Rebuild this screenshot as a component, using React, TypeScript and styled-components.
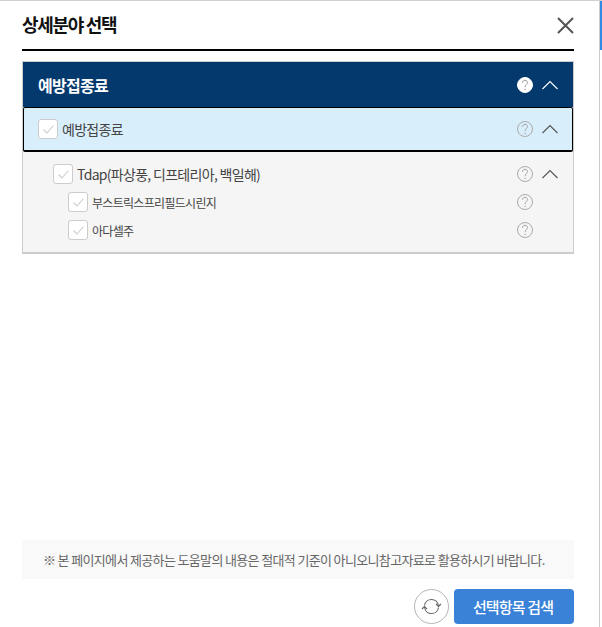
import { createGlobalStyle, styled } from "styled-components";

const GlobalStyle = createGlobalStyle`
  html, body {
    margin: 0;
    padding: 0;
    background: #fff;
  }
  body {
    font-family: "Noto Sans CJK KR", "Noto Sans", sans-serif;
    overflow: hidden;
  }
`;

const Page = styled.div`
  width: 602px;
  height: 627px;
  box-sizing: border-box;
  display: flex;
  border-top: 1px solid #d0d0d0;
`;

const Modal = styled.div`
  width: 600px;
  box-sizing: border-box;
  padding: 0 25px 0 22px;
  display: flex;
  flex-direction: column;
  border-right: 1px solid #cccccc;
`;

const ScrollTrack = styled.div`
  width: 2px;
  height: 100%;
  background: #fff;
`;

const ScrollThumb = styled.div`
  width: 2px;
  height: 49px;
  background: #2f8be6;
`;

const Header = styled.div`
  height: 50px;
  box-sizing: border-box;
  flex: none;
  display: flex;
  align-items: center;
  justify-content: space-between;
  border-bottom: 2px solid #000;
`;

const Title = styled.h1`
  margin: 0 0 2px;
  font-size: 18px;
  font-weight: 700;
  letter-spacing: -1.3px;
  color: #111;
`;

const CloseButton = styled.button`
  border: 0;
  padding: 0;
  background: none;
  width: 17px;
  height: 17px;
  display: block;
`;

const Tree = styled.div`
  margin-top: 10px;
  border: 1px solid #ccc;
  border-bottom-width: 2px;
  background: #f5f5f5;
  padding-bottom: 8px;
`;

const GroupHead = styled.div`
  height: 45px;
  display: flex;
  align-items: center;
  padding: 0 15px;
  background: #03396c;
  color: #fff;
  font-size: 16px;
  font-weight: 700;
  letter-spacing: -0.7px;
`;

const SelectedRow = styled.div`
  height: 45px;
  box-sizing: border-box;
  display: flex;
  align-items: center;
  padding: 0 14px;
  background: #d9eefb;
  border: 1px solid #000;
  border-bottom-width: 2px;
  border-radius: 2px;
`;

const Children = styled.div`
  padding-top: 8px;
`;

const Row = styled.div<{ $indent: number }>`
  height: 28px;
  display: flex;
  align-items: center;
  padding: 0 15px 0 ${(p) => p.$indent}px;
`;

const Check = styled.span`
  width: 20px;
  height: 20px;
  flex: none;
  box-sizing: border-box;
  border: 1px solid #ccc;
  border-radius: 3px;
  background: #fff;
  margin-right: 4px;
  display: flex;
  align-items: center;
  justify-content: center;
`;

const Label = styled.span<{ $size: number }>`
  flex: 1;
  font-size: ${(p) => p.$size}px;
  letter-spacing: -0.7px;
  color: #444;
  white-space: nowrap;
`;

const GroupLabel = styled.span`
  flex: 1;
`;

const IconSlot = styled.span`
  width: 16px;
  height: 16px;
  flex: none;
  margin-left: 9px;
  display: block;
`;

const Spacer = styled.div`
  flex: 1;
`;

const Notice = styled.div`
  height: 39px;
  flex: none;
  display: flex;
  align-items: center;
  padding-left: 21px;
  background: #f9f9f9;
  font-size: 13px;
  letter-spacing: -0.65px;
  color: #666;
  white-space: nowrap;
`;

const Footer = styled.div`
  height: 48px;
  flex: none;
  display: flex;
  justify-content: flex-end;
  align-items: flex-start;
  gap: 5px;
  padding-top: 10px;
  box-sizing: border-box;
`;

const ResetButton = styled.button`
  width: 35px;
  height: 35px;
  padding: 0;
  border: 1px solid #b5b5b5;
  border-radius: 50%;
  background: #fff;
  display: flex;
  align-items: center;
  justify-content: center;
`;

const SearchButton = styled.button`
  width: 120px;
  height: 35px;
  padding: 0 2px 0 0;
  border: 0;
  border-radius: 4px;
  background: #3a82d8;
  color: #fff;
  font-family: inherit;
  font-size: 15px;
  font-weight: 500;
  letter-spacing: -0.85px;
`;

const CheckMark = () => (
  <svg width="13" height="11" viewBox="0 0 13 11" fill="none">
    <path d="M1.5 5.5 5 9 11.5 1.5" stroke="#cdcdcd" strokeWidth="1.1" />
  </svg>
);

const Help = ({ filled }: { filled?: boolean }) => (
  <svg width="16" height="16" viewBox="0 0 16 16" style={{ display: "block" }}>
    <circle cx="8" cy="8" r="7.5" fill={filled ? "#fff" : "none"} stroke={filled ? "#fff" : "#aaa"} strokeWidth="1" />
    <path d="M5.5 5.8C5.5 4.3 6.6 3.3 8 3.3 9.4 3.3 10.5 4.3 10.5 5.6 10.5 7.4 8.1 7.6 8.1 10.2" fill="none" stroke={filled ? "#999" : "#a5a5a5"} strokeWidth="1" />
    <circle cx="8.1" cy="12.4" r="0.7" fill={filled ? "#999" : "#a5a5a5"} />
  </svg>
);

const Chevron = ({ color }: { color: string }) => (
  <svg width="16" height="16" viewBox="0 0 16 16" style={{ display: "block" }}>
    <path d="M0.5 12 8 4.5 15.5 12" fill="none" stroke={color} strokeWidth="1.1" />
  </svg>
);

const TreeRow = ({ text, indent, size, chevron }: { text: string; indent: number; size: number; chevron?: boolean }) => (
  <Row $indent={indent}>
    <Check>
      <CheckMark />
    </Check>
    <Label $size={size}>{text}</Label>
    <IconSlot>
      <Help />
    </IconSlot>
    <IconSlot>{chevron && <Chevron color="#555" />}</IconSlot>
  </Row>
);

export default function App() {
  return (
    <>
      <GlobalStyle />
      <Page>
        <Modal>
          <Header>
            <Title>상세분야 선택</Title>
            <CloseButton aria-label="닫기">
              <svg width="17" height="17" viewBox="0 0 17 17" style={{ display: "block" }}>
                <path d="M1 1 16 16M16 1 1 16" stroke="#555" strokeWidth="2" />
              </svg>
            </CloseButton>
          </Header>
          <Tree>
            <GroupHead>
              <GroupLabel>예방접종료</GroupLabel>
              <IconSlot>
                <Help filled />
              </IconSlot>
              <IconSlot>
                <Chevron color="#fff" />
              </IconSlot>
            </GroupHead>
            <SelectedRow>
              <Check>
                <CheckMark />
              </Check>
              <Label $size={14}>예방접종료</Label>
              <IconSlot>
                <Help />
              </IconSlot>
              <IconSlot>
                <Chevron color="#555" />
              </IconSlot>
            </SelectedRow>
            <Children>
              <TreeRow text="Tdap(파상풍, 디프테리아, 백일해)" indent={30} size={14} chevron />
              <TreeRow text="부스트릭스프리필드시린지" indent={45} size={12} />
              <TreeRow text="아다셀주" indent={45} size={12} />
            </Children>
          </Tree>
          <Spacer />
          <Notice>※ 본 페이지에서 제공하는 도움말의 내용은 절대적 기준이 아니오니참고자료로 활용하시기 바랍니다.</Notice>
          <Footer>
            <ResetButton aria-label="초기화">
              <svg width="21" height="21" viewBox="0 0 21 21" fill="none">
                <path d="M3.5 9.5C4 6 7 3.5 10.5 3.5 14 3.5 17 6 17.5 10" stroke="#666" strokeWidth="1.1" />
                <path d="M15 8 17.5 10.5 20 8" stroke="#666" strokeWidth="1.1" />
                <path d="M17.5 11.5C17 15 14 17.5 10.5 17.5 7 17.5 4 15 3.5 11" stroke="#666" strokeWidth="1.1" />
                <path d="M1 13 3.5 10.5 6 13" stroke="#666" strokeWidth="1.1" />
              </svg>
            </ResetButton>
            <SearchButton>선택항목 검색</SearchButton>
          </Footer>
        </Modal>
        <ScrollTrack>
          <ScrollThumb />
        </ScrollTrack>
      </Page>
    </>
  );
}
